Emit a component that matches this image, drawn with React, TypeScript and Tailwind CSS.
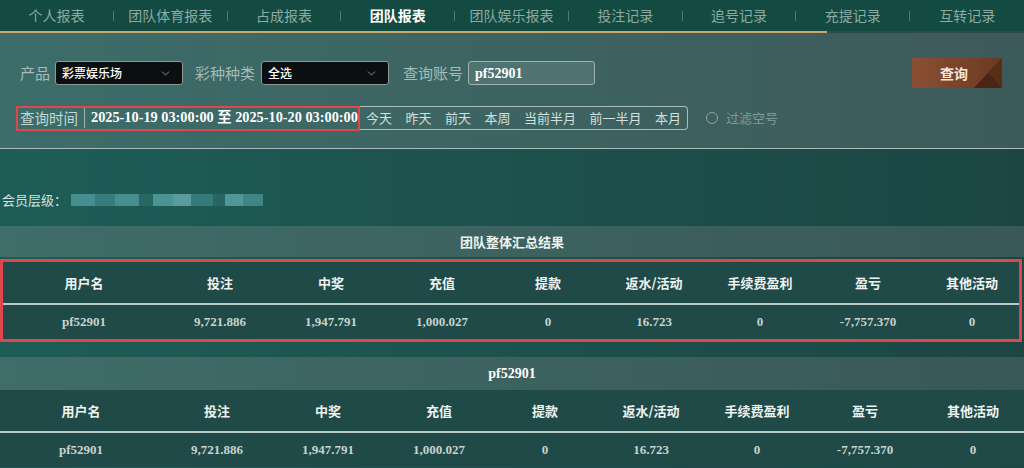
import { ChevronDown } from 'lucide-react'

const tabs = ['个人报表', '团队体育报表', '占成报表', '团队报表', '团队娱乐报表', '投注记录', '追号记录', '充提记录', '互转记录']
const quick = ['今天', '昨天', '前天', '本周', '当前半月', '前一半月', '本月']
const cols = ['用户名', '投注', '中奖', '充值', '提款', '返水/活动', '手续费盈利', '盈亏', '其他活动']
const row = ['pf52901', '9,721.886', '1,947.791', '1,000.027', '0', '16.723', '0', '-7,757.370', '0']

const sans = { fontFamily: '"Noto Sans CJK SC", "Noto Sans", sans-serif' }
const serif = { fontFamily: '"Liberation Serif", "Noto Sans CJK SC", serif' }

function Select({ value }: { value: string }) {
  return (
    <div className="flex h-[24px] w-[128px] items-center justify-between rounded-[3px] border border-[#8a9a98] bg-[#0b0f10] pl-[6px] pr-[10px] text-[12px] font-medium text-white">
      <span>{value}</span>
      <ChevronDown className="h-[13px] w-[13px] text-[#9aa]" strokeWidth={1.5} />
    </div>
  )
}

function Table({ outlined }: { outlined?: boolean }) {
  const grid = 'grid grid-cols-[162px_110px_112px_110px_102px_110px_102px_114px_1fr]'
  return (
    <div className={outlined ? 'mr-[2px] border-[3px] border-[#e0474c] bg-[#1f4a47]' : 'bg-[#1f4a47]'}>
      <div className={`${grid} h-[41px] items-center text-center text-[13px] font-bold text-[#eef3f1]`}>
        {cols.map((c) => (
          <div key={c}>{c}</div>
        ))}
      </div>
      <div className="h-[2px] bg-[#b9c9c6]" />
      <div className={`${grid} h-[34px] items-center text-center text-[13px] font-bold text-[#c9d3cf]`} style={serif}>
        {row.map((v, i) => (
          <div key={i}>{v}</div>
        ))}
      </div>
    </div>
  )
}

export default function App() {
  return (
    <div className="h-[468px] w-[1024px] overflow-hidden bg-gradient-to-r from-[#1e5d57] to-[#1b4644]" style={sans}>
      {/* tabs */}
      <div className="bg-[#134a42]">
        <div className="flex h-[31px] items-center text-[14px] text-[#8eaaa3]">
          {tabs.map((t, i) => (
            <div key={t} className="flex flex-1 items-center">
              <div className={i === 3 ? 'flex-1 text-center font-bold text-white' : 'flex-1 text-center'}>{t}</div>
              {i < tabs.length - 1 && <div className="h-[10px] w-px bg-[#4f7a72]" />}
            </div>
          ))}
        </div>
        <div className="flex h-[2px]">
          <div className="w-[827px] bg-[#c9a86a]" />
          <div className="flex-1 bg-[#2f4a46]" />
        </div>
      </div>

      {/* filters */}
      <div className="h-[116px] border-b border-[#a9bcb9] bg-gradient-to-r from-[#3c6d6a] to-[#3d5a5a] px-[20px] pt-[25px]">
        <div className="flex h-[30px] items-center text-[15px] text-[#a7bcb8]">
          <span>产品</span>
          <div className="ml-[5px]">
            <Select value="彩票娱乐场" />
          </div>
          <span className="ml-[12px]">彩种种类</span>
          <div className="ml-[6px]">
            <Select value="全选" />
          </div>
          <span className="ml-[14px]">查询账号</span>
          <div className="ml-[5px] flex h-[24px] w-[127px] items-center rounded-[3px] border border-[#9fb3b0] bg-[#4f7371] px-[6px] text-[14px] font-bold text-white" style={serif}>
            pf52901
          </div>
          <div className="relative ml-auto mr-[2px] flex h-[30px] w-[90px] items-center justify-center overflow-hidden bg-gradient-to-r from-[#8a4f33] to-[#6b3a22] text-[14px] font-bold text-[#f3e6dc]">
            <span className="pr-[6px]">查询</span>
            <svg className="absolute right-0 top-0 h-[30px] w-[28px]" viewBox="0 0 28 30">
              <polygon points="28,0 28,30 0,30" fill="#4a2414" />
              <polygon points="28,0 14,15 28,30" fill="#5a2d17" />
            </svg>
          </div>
        </div>
        <div className="mt-[18px] flex h-[24px] items-center">
          <div className="-ml-[4px] flex h-[25px] items-center border-[2px] border-[#e0474c]">
            <span className="pl-[2px] pr-[6px] text-[14.5px] text-[#c6d6d3]">查询时间</span>
            <div className="h-[20px] w-px bg-[#9fb3b0]" />
            <span className="w-[273px] overflow-hidden whitespace-nowrap pl-[6px] text-[14.3px] font-bold text-white" style={serif}>
              2025-10-19 03:00:00 至 2025-10-20 03:00:00
            </span>
          </div>
          <div className="flex h-[24px] items-center gap-[13.5px] rounded-r-[4px] border border-l-0 border-[#a9bcb9] pl-[6px] pr-[6px] text-[13px] text-[#d4e0dd]">
            {quick.map((q) => (
              <span key={q}>{q}</span>
            ))}
          </div>
          <div className="ml-[18px] h-[12px] w-[12px] rounded-full border border-[#8fa7a3]" />
          <span className="ml-[8px] text-[13px] text-[#7f9c97]">过滤空号</span>
        </div>
      </div>

      {/* member level */}
      <div className="flex h-[77px] items-center pl-[2px] pt-[24px] text-[13px] text-[#d5e0dd]">
        <span>会员层级：</span>
        <div className="ml-[4px] flex items-center">
          <div className="h-[12px] w-[24px] bg-[#4f9a9c] opacity-80" />
          <div className="h-[12px] w-[20px] bg-[#3e8486] opacity-80" />
          <div className="h-[12px] w-[24px] bg-[#58a4a6] opacity-70" />
          <div className="h-[12px] w-[14px] bg-[#2f6f6e] opacity-60" />
          <div className="h-[12px] w-[20px] bg-[#56a2a4] opacity-80" />
          <div className="h-[12px] w-[18px] bg-[#69adaf] opacity-80" />
          <div className="h-[12px] w-[22px] bg-[#3f8a8c] opacity-70" />
          <div className="h-[12px] w-[12px] bg-[#2f6f6e] opacity-60" />
          <div className="h-[12px] w-[18px] bg-[#5fa8aa] opacity-80" />
          <div className="h-[12px] w-[20px] bg-[#4a9194] opacity-80" />
        </div>
      </div>

      {/* summary */}
      <div className="flex h-[31px] items-center justify-center bg-gradient-to-r from-[#3f6d69] to-[#395857] text-[13px] font-bold text-[#eef3f1]">
        团队整体汇总结果
      </div>
      <div className="pt-[2px]">
        <Table outlined />
      </div>

      {/* per user */}
      <div className="mt-[15px] flex h-[33px] items-center justify-center bg-gradient-to-r from-[#3f6d69] to-[#395857] text-[14px] font-bold text-white" style={serif}>
        pf52901
      </div>
      <Table />
    </div>
  )
}
